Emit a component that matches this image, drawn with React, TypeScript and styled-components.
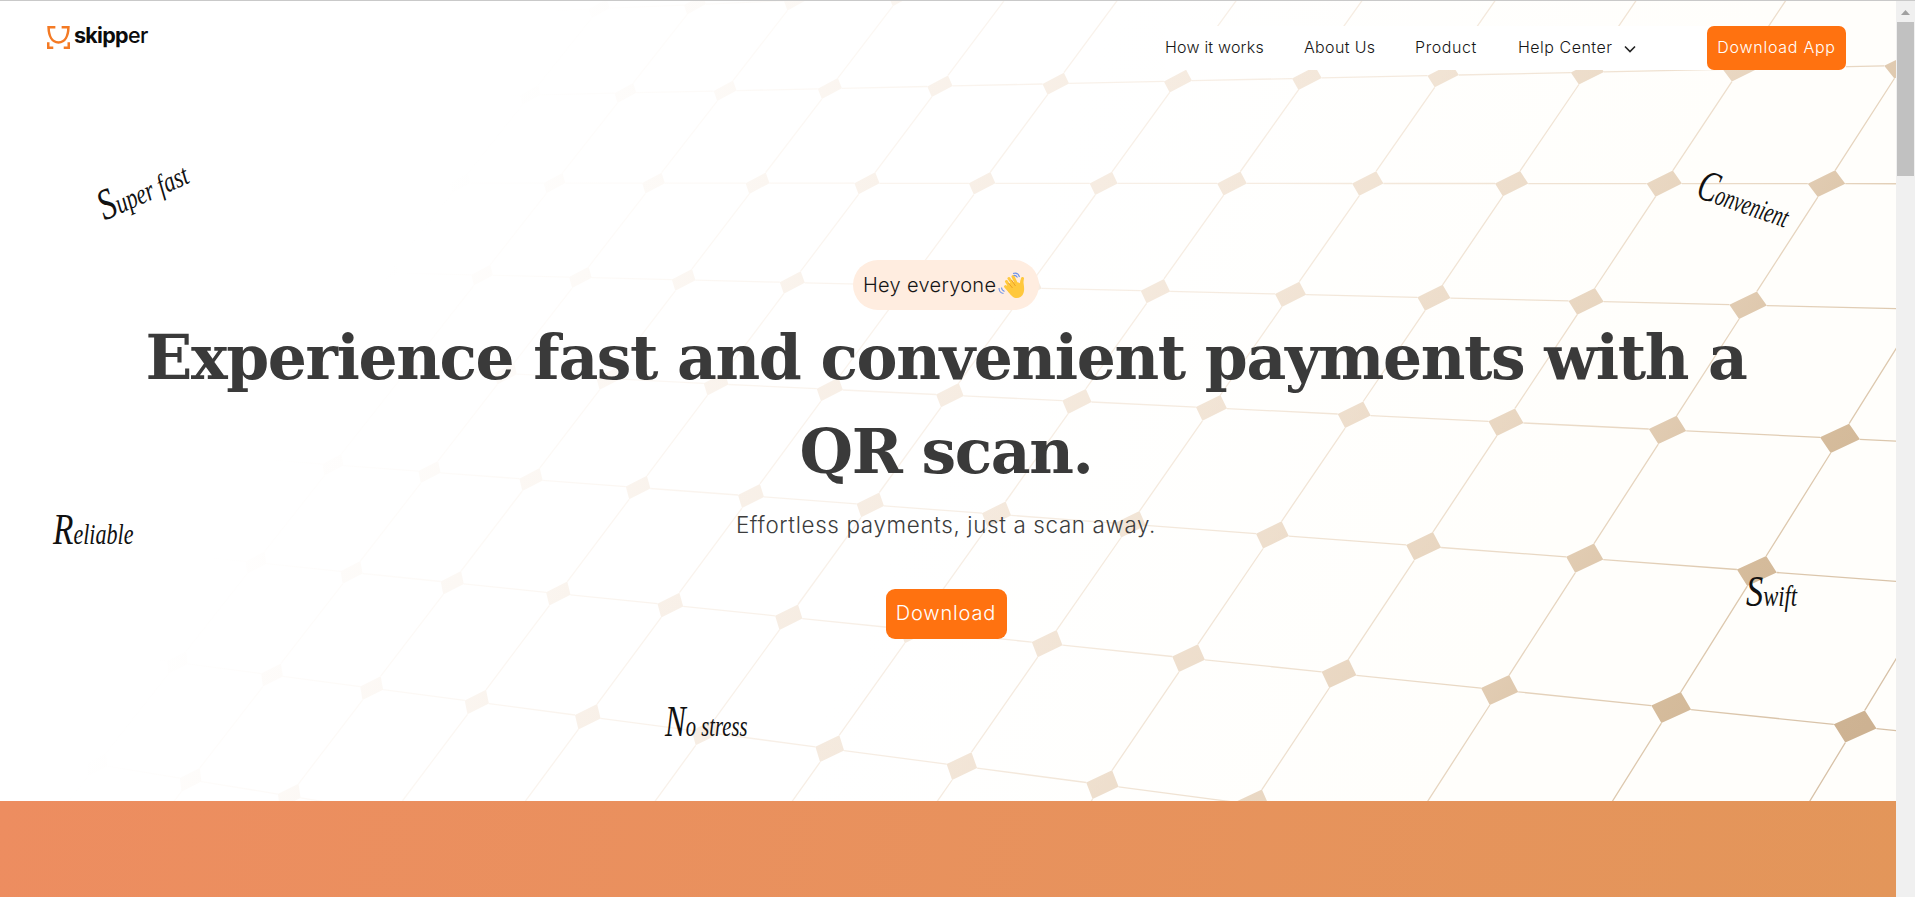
import React from 'react';
import styled, { createGlobalStyle } from 'styled-components';

const Global = createGlobalStyle`
  * { box-sizing: border-box; }
  html, body { margin: 0; padding: 0; overflow: hidden; }
  body { font-family: Inter, "Open Sans", sans-serif; font-weight: 300; color: #161616; }
`;

const Window = styled.div`
  display: flex;
  width: 1915px;
  height: 897px;
  border-top: 1px solid #c9c9c9;
  background: #fff;
`;

const Page = styled.main`
  flex: 1;
  display: flex;
  flex-direction: column;
  min-width: 0;
`;

const Hero = styled.section`
  position: relative;
  height: 800px;
  padding: 25px 50px 0 47px;
  background: linear-gradient(112deg, #fff 50%, #fffefb 80%);
`;

const Backdrop = styled.svg`
  position: absolute;
  inset: 0;
  width: 1896px;
  height: 800px;
`;

const Header = styled.header`
  position: relative;
  display: flex;
  justify-content: space-between;
  align-items: flex-start;
  height: 44px;
`;

const Logo = styled.a`
  display: flex;
  gap: 4px;
  height: 22px;
`;

const LogoWord = styled.span`
  font-family: Inter, sans-serif;
  font-size: 21.5px;
  line-height: 19px;
  font-weight: 700;
  letter-spacing: -0.7px;
  color: #0c0c0c;
  i { font-style: normal; font-weight: 500; }
`;

const Nav = styled.nav`
  display: flex;
  align-items: center;
  height: 44px;
  background: #fff;
`;

const NavLink = styled.a<{ $width: number; $gap: number; $track?: number }>`
  width: ${(p) => p.$width}px;
  margin: 0 ${(p) => p.$gap}px 2px 0;
  font-size: 16px;
  letter-spacing: ${(p) => p.$track ?? 0}px;
  white-space: nowrap;
`;

const Chevron = styled.svg`
  width: 12px;
  height: 8px;
  margin: 2px 71px 0 0;
`;

const Button = styled.button<{ $large?: boolean }>`
  display: flex;
  align-items: center;
  justify-content: center;
  width: ${(p) => (p.$large ? 121 : 139)}px;
  height: ${(p) => (p.$large ? 50 : 44)}px;
  padding: 0 0 2px;
  border: 0;
  border-radius: ${(p) => (p.$large ? 9 : 7)}px;
  background: #ff7210;
  color: #fff;
  font-family: inherit;
  font-weight: 300;
  font-size: ${(p) => (p.$large ? 20 : 16)}px;
  letter-spacing: ${(p) => (p.$large ? 0.85 : 0.75)}px;
  white-space: nowrap;
`;

const Intro = styled.div`
  position: relative;
  display: flex;
  flex-direction: column;
  align-items: center;
  width: 1798px;
  padding-top: 190px;
`;

const Greeting = styled.div`
  display: flex;
  align-items: center;
  gap: 2px;
  width: 186px;
  height: 50px;
  padding-left: 10px;
  border-radius: 25px;
  background: #ffede0;
  font-size: 20px;
  letter-spacing: 0.3px;
`;

const Title = styled.h1`
  margin: 1px 0 0;
  font-family: "DejaVu Serif", serif;
  font-weight: 700;
  font-size: 61.5px;
  line-height: 94px;
  letter-spacing: -1.4px;
  color: #3a3a3a;
  text-align: center;
  white-space: nowrap;
`;

const Tagline = styled.p`
  margin: 9px 0 47px;
  height: 34px;
  line-height: 34px;
  font-size: 22.4px;
  letter-spacing: 0.64px;
  color: #3c3c3c;
`;

const Note = styled.span<{ $x: number; $y: number; $turn?: number; $squeeze?: number }>`
  position: absolute;
  left: ${(p) => p.$x}px;
  top: ${(p) => p.$y}px;
  font-family: "Liberation Serif", serif;
  font-style: italic;
  font-weight: 400;
  font-size: 29px;
  line-height: 40px;
  color: #111;
  white-space: nowrap;
  transform-origin: 0 30px;
  transform: rotate(${(p) => p.$turn ?? 0}deg) scaleX(${(p) => p.$squeeze ?? 0.8});
  &::first-letter { font-size: 44px; line-height: 40px; }
`;

const Band = styled.section`
  flex: 1;
  background: linear-gradient(100deg, #ed8d60, #e3965a);
`;

const Scrollbar = styled.aside`
  width: 19px;
  display: flex;
  flex-direction: column;
  align-items: center;
  background: #f0f0f0;
`;

const Arrow = styled.svg`
  width: 9px;
  height: 5px;
  margin: 9px 0 7px;
`;

const Thumb = styled.div`
  width: 17px;
  height: 154px;
  background: #c1c1c1;
`;

type Point = [number, number];

// Perspective map of the unit square onto a quadrilateral.
function perspective(a: Point, b: Point, c: Point, d: Point) {
  const dx1 = b[0] - c[0], dx2 = d[0] - c[0], sx = a[0] - b[0] + c[0] - d[0];
  const dy1 = b[1] - c[1], dy2 = d[1] - c[1], sy = a[1] - b[1] + c[1] - d[1];
  const det = dx1 * dy2 - dx2 * dy1;
  const g = (sx * dy2 - dx2 * sy) / det;
  const h = (dx1 * sy - sx * dy1) / det;
  return (u: number, v: number): Point => {
    const w = g * u + h * v + 1;
    return [
      ((b[0] - a[0] + g * b[0]) * u + (d[0] - a[0] + h * d[0]) * v + a[0]) / w,
      ((b[1] - a[1] + g * b[1]) * u + (d[1] - a[1] + h * d[1]) * v + a[1]) / w,
    ];
  };
}

const project = perspective([757.5, 182.2], [1826.5, 182.7], [1499.5, 689], [452.2, 581.7]);
const at = (i: number, j: number) =>
  project((i + 8) / 8, (j - 1) / 4).map((n) => n.toFixed(1)).join(',');

const rows = Array.from({ length: 10 }, (_, k) => k - 1);
const cols = Array.from({ length: 17 }, (_, k) => k - 12);
const D = 0.112;

function TileFloor() {
  return (
    <Backdrop viewBox="0 0 1896 800">
      <defs>
        <linearGradient id="fade" gradientUnits="userSpaceOnUse" x1="400" y1="250" x2="1667" y2="1043">
          <stop offset="0" stopColor="#ecd2b8" stopOpacity="0" />
          <stop offset="0.12" stopColor="#ecd2b8" stopOpacity="0.12" />
          <stop offset="0.26" stopColor="#e8ccb0" stopOpacity="0.27" />
          <stop offset="0.5" stopColor="#e2c5a6" stopOpacity="0.44" />
          <stop offset="0.7" stopColor="#dabd9c" stopOpacity="0.62" />
          <stop offset="0.88" stopColor="#cfb28e" stopOpacity="0.88" />
          <stop offset="1" stopColor="#cdb292" stopOpacity="1" />
        </linearGradient>
      </defs>
      <g stroke="url(#fade)" strokeWidth="1.3" strokeOpacity="0.8" fill="none">
        {rows.map((j) => (
          <path key={`r${j}`} d={cols.map((i) => `M${at(i + D, j)}L${at(i + 1 - D, j)}`).join('')} />
        ))}
        {cols.map((i) => (
          <path key={`c${i}`} d={rows.map((j) => `M${at(i, j + D)}L${at(i, j + 1 - D)}`).join('')} />
        ))}
      </g>
      <path
        fill="url(#fade)"
        d={rows
          .flatMap((j) => cols.map((i) => `M${at(i - D, j)}L${at(i, j - D)}L${at(i + D, j)}L${at(i, j + D)}Z`))
          .join('')}
      />
    </Backdrop>
  );
}

function LogoMark() {
  return (
    <svg width="23" height="23" viewBox="0 0 22 22" fill="none" stroke="#f47a24" strokeWidth="2.4">
      <path d="M8 1.200H1.500C1.700 9 4.500 15.700 11 15.700S20.300 9 20.500 1.200H14" />
      <path d="M1.200 15.500V20.800H6M20.800 15.500V20.800H16" />
    </svg>
  );
}

function Wave() {
  return (
    <svg width="28" height="27" viewBox="0 0 28 27" fill="none">
      <path d="M8.500 9.500L12.500 16M11 6.500L15.500 13M15 4.500L18.500 12M24.500 6.500L23 13" stroke="#ffc83d" strokeWidth="3" strokeLinecap="round" />
      <path d="M8 14.500L13.500 10L20.500 10.500L22.500 11.500C22.500 8 23 5.500 25 6.500C25.500 12 27 17 25.500 21C24 26 18 27.500 14.500 24.500C11.500 22 9 18 8 14.500Z" fill="#ffc83d" />
      <path d="M7.500 14.500L12 19.500" stroke="#ffc83d" strokeWidth="3" strokeLinecap="round" />
      <path d="M10.500 11L14.500 16M13.500 8L17.500 14" stroke="#e8961f" strokeWidth=".8" />
      <path d="M15 1.500C18 .5 20.500 2 21.500 5M15.500 3.500C17.500 3 18.500 4 19.500 5.500M1 16C1 19 2.500 21 5.500 21.500M3.500 15.500C3.500 17.500 4.500 18.500 6.500 19.500" stroke="#6f93e8" strokeWidth="1.100" />
    </svg>
  );
}

export default function App() {
  return (
    <Window>
      <Global />
      <Page>
        <Hero>
          <TileFloor />
          <Header>
            <Logo>
              <LogoMark />
              <LogoWord>skipp<i>er</i></LogoWord>
            </Logo>
            <Nav>
              <NavLink $width={99} $gap={40} $track={0.2}>How it works</NavLink>
              <NavLink $width={71} $gap={40} $track={0.35}>About Us</NavLink>
              <NavLink $width={62} $gap={41} $track={0.6}>Product</NavLink>
              <NavLink $width={95} $gap={11} $track={0.5}>Help Center</NavLink>
              <Chevron viewBox="0 0 12 8" fill="none" stroke="#222" strokeWidth="1.600">
                <path d="M1 1.500L6 6.500L11 1.500" />
              </Chevron>
              <Button>Download App</Button>
            </Nav>
          </Header>
          <Intro>
            <Greeting>Hey everyone<Wave /></Greeting>
            <Title>Experience fast and convenient payments with a<br />QR scan.</Title>
            <Tagline>Effortless payments, just a scan away.</Tagline>
            <Button $large>Download</Button>
          </Intro>
          <Note $x={103} $y={186} $turn={-24} $squeeze={0.76}>Super fast</Note>
          <Note $x={1696} $y={162} $turn={19} $squeeze={0.67}>Convenient</Note>
          <Note $x={53} $y={509} $squeeze={0.76}>Reliable</Note>
          <Note $x={1746} $y={571} $squeeze={0.78}>Swift</Note>
          <Note $x={665} $y={701} $squeeze={0.71}>No stress</Note>
        </Hero>
        <Band />
      </Page>
      <Scrollbar>
        <Arrow viewBox="0 0 9 5"><path d="M0 5L4.500 0L9 5Z" fill="#a0a0a0" /></Arrow>
        <Thumb />
      </Scrollbar>
    </Window>
  );
}
